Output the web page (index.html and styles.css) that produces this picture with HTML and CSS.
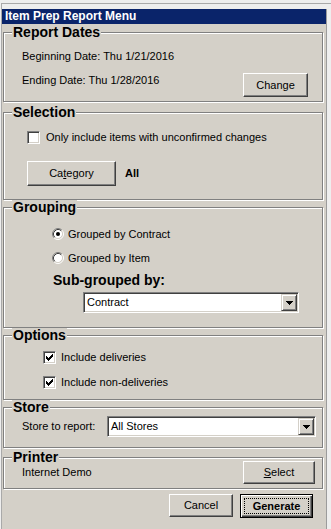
FILE: index.html
```html
<!DOCTYPE html>
<html lang="en">
<head>
<meta charset="utf-8">
<title>Item Prep Report Menu</title>
<link rel="stylesheet" href="styles.css">
</head>
<body>
<div class="screen">
  <div class="window">
    <div class="titlebar">Item Prep Report Menu</div>

    <section class="gb gb-dates">
      <div class="gb-title">Report Dates</div>
      <div class="gb-body body-dates">
        <div class="text dates-begin">Beginning Date: Thu 1/21/2016</div>
        <div class="dates-row">
          <span class="text dates-end">Ending Date: Thu 1/28/2016</span>
          <button class="btn btn-change" type="button">Change</button>
        </div>
      </div>
    </section>

    <section class="gb gb-selection">
      <div class="gb-title">Selection</div>
      <div class="gb-body body-selection">
        <div class="check-row sel-check">
          <span class="checkbox"></span>
          <span class="text">Only include items with unconfirmed changes</span>
        </div>
        <div class="category-row">
          <button class="btn btn-category" type="button">Ca<u>t</u>egory</button>
          <span class="bold-value">All</span>
        </div>
      </div>
    </section>

    <section class="gb gb-grouping">
      <div class="gb-title">Grouping</div>
      <div class="gb-body body-grouping">
        <div class="radio-row radio-first">
          <svg class="radio" width="12" height="12" viewBox="0 0 12 12">
            <circle cx="6" cy="6" r="4.5" fill="#fff"/>
            <path d="M2.11 9.89A5.5 5.5 0 0 1 9.89 2.11" fill="none" stroke="#808080"/>
            <path d="M9.89 2.11A5.5 5.5 0 0 1 2.11 9.89" fill="none" stroke="#ffffff"/>
            <path d="M2.82 9.18A4.5 4.5 0 0 1 9.18 2.82" fill="none" stroke="#404040"/>
            <path d="M9.18 2.82A4.5 4.5 0 0 1 2.82 9.18" fill="none" stroke="#d4d0c8"/>
            <circle cx="6" cy="6" r="2" fill="#000"/>
          </svg>
          <span class="text">Grouped by Contract</span>
        </div>
        <div class="radio-row radio-second">
          <svg class="radio" width="12" height="12" viewBox="0 0 12 12">
            <circle cx="6" cy="6" r="4.5" fill="#fff"/>
            <path d="M2.11 9.89A5.5 5.5 0 0 1 9.89 2.11" fill="none" stroke="#808080"/>
            <path d="M9.89 2.11A5.5 5.5 0 0 1 2.11 9.89" fill="none" stroke="#ffffff"/>
            <path d="M2.82 9.18A4.5 4.5 0 0 1 9.18 2.82" fill="none" stroke="#404040"/>
            <path d="M9.18 2.82A4.5 4.5 0 0 1 2.82 9.18" fill="none" stroke="#d4d0c8"/>
          </svg>
          <span class="text">Grouped by Item</span>
        </div>
        <div class="sub-label">Sub-grouped by:</div>
        <div class="combo combo-sub">
          <span class="combo-text">Contract</span>
          <span class="combo-btn">
            <svg width="7" height="4" viewBox="0 0 7 4"><path d="M0 0h7v1H0z M1 1h5v1H1z M2 2h3v1H2z M3 3h1v1H3z" fill="#000"/></svg>
          </span>
        </div>
      </div>
    </section>

    <section class="gb gb-options">
      <div class="gb-title">Options</div>
      <div class="gb-body body-options">
        <div class="check-row opt-check opt-first">
          <span class="checkbox">
            <svg width="11" height="11" viewBox="1 1 11 11"><path d="M9 3h1v1H9z M8 4h2v1H8z M3 5h1v1H3z M7 5h3v1H7z M3 6h2v1H3z M6 6h3v1H6z M3 7h5v1H3z M4 8h3v1H4z M5 9h1v1H5z" fill="#000"/></svg>
          </span>
          <span class="text">Include deliveries</span>
        </div>
        <div class="check-row opt-check opt-second">
          <span class="checkbox">
            <svg width="11" height="11" viewBox="1 1 11 11"><path d="M9 3h1v1H9z M8 4h2v1H8z M3 5h1v1H3z M7 5h3v1H7z M3 6h2v1H3z M6 6h3v1H6z M3 7h5v1H3z M4 8h3v1H4z M5 9h1v1H5z" fill="#000"/></svg>
          </span>
          <span class="text">Include non-deliveries</span>
        </div>
      </div>
    </section>

    <section class="gb gb-store">
      <div class="gb-title">Store</div>
      <div class="gb-body body-store">
        <div class="store-row">
          <span class="text">Store to report:</span>
          <div class="combo combo-store">
            <span class="combo-text">All Stores</span>
            <span class="combo-btn">
              <svg width="7" height="4" viewBox="0 0 7 4"><path d="M0 0h7v1H0z M1 1h5v1H1z M2 2h3v1H2z M3 3h1v1H3z" fill="#000"/></svg>
            </span>
          </div>
        </div>
      </div>
    </section>

    <section class="gb gb-printer">
      <div class="gb-title">Printer</div>
      <div class="gb-body body-printer">
        <div class="printer-row">
          <span class="text printer-name">Internet Demo</span>
          <button class="btn btn-select" type="button"><u>S</u>elect</button>
        </div>
      </div>
    </section>

    <div class="actions">
      <button class="btn btn-cancel" type="button">Cancel</button>
      <button class="btn btn-default btn-generate" type="button"><span class="focus-rect">Generate</span></button>
    </div>
  </div>
</div>
</body>
</html>
```

FILE: styles.css
```css
* { box-sizing: border-box; }

html, body { margin: 0; padding: 0; }

body {
  width: 331px;
  height: 529px;
  overflow: hidden;
  padding: 3px 0 0 1px;
  background: #eeeeee;
  font-family: "Liberation Sans", Arial, sans-serif;
  font-size: 11px;
  line-height: 13px;
  color: #000;
}

.screen {
  height: 526px;
  border-top: 1px solid #a9a9a9;
  border-left: 1px solid #a9a9a9;
  padding-top: 5px;
}

.window {
  width: 325px;
  height: 520px;
  background: #d4d0c8;
  border-right: 1px solid #9c9c9c;
  display: flex;
  flex-direction: column;
}

.titlebar {
  height: 15px;
  background: #0a246a;
  color: #fff;
  font-size: 12px;
  font-weight: bold;
  line-height: 15px;
  padding-left: 3px;
  white-space: nowrap;
}

/* group boxes */
.gb {
  margin-left: 1px;
  width: 320px;
  border: 1px solid #808080;
  box-shadow: inset 1px 1px 0 #fff, 1px 1px 0 #fff;
  flex: none;
}

.gb-title {
  width: max-content;
  margin: -8px 0 0 8px;
  padding: 0 1px;
  background: #d4d0c8;
  font-size: 14px;
  font-weight: bold;
  line-height: 15px;
}

.text { white-space: nowrap; }

.gb-dates { margin-top: 8px; padding-bottom: 4px; }
.body-dates { padding: 0 14px 0 18px; }
.dates-begin { margin-top: 10px; }
.dates-row {
  margin-top: 10px;
  display: flex;
  align-items: flex-start;
  justify-content: space-between;
}
.dates-end { margin-top: 1px; }

.gb-selection { margin-top: 10px; padding-bottom: 13px; }
.body-selection { padding-left: 23px; }
.check-row { display: flex; align-items: center; }
.sel-check { margin-top: 11px; gap: 6px; }
.category-row {
  margin-top: 17px;
  display: flex;
  align-items: center;
  gap: 9px;
}
.bold-value { font-weight: bold; font-size: 11px; }

.gb-grouping { margin-top: 7px; padding-bottom: 14px; }
.body-grouping { padding-left: 48px; }
.radio-row {
  display: flex;
  align-items: center;
  gap: 4px;
  height: 14px;
}
.radio { display: block; flex: none; }
.radio-first { margin-top: 12px; }
.radio-second { margin-top: 10px; }
.sub-label {
  margin: 7px 0 0 1px;
  font-size: 14px;
  font-weight: bold;
  line-height: 16px;
}
.combo-sub { margin: 4px 0 0 31px; width: 216px; }

.gb-options { margin-top: 7px; padding-bottom: 10px; }
.body-options { padding-left: 39px; }
.opt-check { gap: 5px; }
.opt-first { margin-top: 8px; }
.opt-second { margin-top: 12px; }

.gb-store { margin-top: 7px; padding-bottom: 10px; }
.body-store { padding: 0 6px 0 18px; }
.store-row {
  margin-top: 1px;
  display: flex;
  align-items: center;
  justify-content: space-between;
}
.combo-store { width: 209px; }

.gb-printer { margin-top: 9px; padding-bottom: 4px; }
.body-printer { padding: 0 7px 0 18px; }
.printer-row {
  margin-top: -4px;
  display: flex;
  align-items: flex-start;
  justify-content: space-between;
}
.printer-name { margin-top: 5px; }

/* controls */
.btn {
  appearance: none;
  margin: 0;
  padding: 0;
  font-family: "Liberation Sans", Arial, sans-serif;
  font-size: 11px;
  line-height: 13px;
  color: #000;
  background: #d4d0c8;
  border: 1px solid;
  border-color: #fff #404040 #404040 #fff;
  box-shadow: inset -1px -1px 0 #808080;
  display: flex;
  align-items: center;
  justify-content: center;
  flex: none;
}
.btn u { text-decoration-thickness: 1px; text-underline-offset: 1px; }

.btn-change { width: 65px; height: 24px; }
.btn-category { width: 89px; height: 25px; }
.btn-select { width: 72px; height: 23px; }
.btn-cancel { width: 64px; height: 23px; }

.btn-default {
  border: 1px solid #000;
  box-shadow: inset 1px 1px 0 #fff, inset -1px -1px 0 #404040, inset -2px -2px 0 #808080;
  padding: 3px;
}
.btn-generate { width: 73px; height: 24px; font-weight: bold; }
.focus-rect {
  flex: 1;
  align-self: stretch;
  border: 1px dotted #000;
  display: flex;
  align-items: center;
  justify-content: center;
}

.actions {
  margin-top: 5px;
  padding-right: 13px;
  display: flex;
  justify-content: flex-end;
  align-items: flex-start;
  gap: 7px;
}

.checkbox {
  width: 13px;
  height: 13px;
  flex: none;
  background: #fff;
  border: 1px solid;
  border-color: #808080 #fff #fff #808080;
  box-shadow: inset 1px 1px 0 #404040, inset -1px -1px 0 #d4d0c8;
}
.checkbox svg { display: block; }

.combo {
  display: flex;
  height: 21px;
  padding: 1px;
  background: #fff;
  border: 1px solid;
  border-color: #808080 #fff #fff #808080;
  box-shadow: inset 1px 1px 0 #404040, inset -1px -1px 0 #d4d0c8;
}
.combo-text {
  flex: 1;
  padding-left: 2px;
  line-height: 17px;
  white-space: nowrap;
}
.combo-btn {
  width: 16px;
  height: 17px;
  flex: none;
  background: #d4d0c8;
  border: 1px solid;
  border-color: #d4d0c8 #404040 #404040 #d4d0c8;
  box-shadow: inset 1px 1px 0 #fff, inset -1px -1px 0 #808080;
  display: flex;
  align-items: center;
  justify-content: center;
}
.combo-btn svg { display: block; }
```
